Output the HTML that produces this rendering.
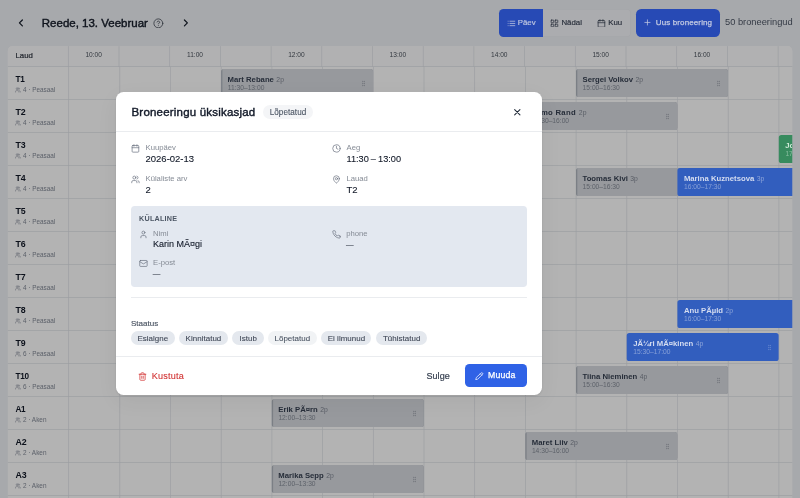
<!DOCTYPE html>
<html lang="et"><head><meta charset="utf-8"><title>Broneeringud</title>
<style>
*{box-sizing:border-box;margin:0;padding:0}
html,body{width:800px;height:498px;overflow:hidden}
body{font-family:"Liberation Sans",sans-serif;background:#a7a9ac;color:#0c111b;position:relative}
svg{display:block;fill:none;stroke:currentColor;stroke-width:2;stroke-linecap:round;stroke-linejoin:round}
.top{position:absolute;left:0;top:0;width:800px;height:45px}
.top .title{position:absolute;left:41.8px;top:14.7px;font-size:11.5px;font-weight:400;color:#0f141d;-webkit-text-stroke:.4px #0f141d;line-height:16px;white-space:nowrap;letter-spacing:0px}
.top svg.chev{position:absolute;width:11.8px;height:11.8px;top:17.1px;stroke-width:2.5;color:#0f141d}
.top svg.help{position:absolute;left:153.2px;top:17.7px;width:10.7px;height:10.7px;color:#30343c;stroke-width:1.8}
.seg{position:absolute;left:499.1px;top:8.6px;width:131.6px;height:28.5px;border-radius:4.6px;background:#abacaf;box-shadow:inset 0 0 0 .6px #a2a4a8}
.seg .a{position:absolute;left:0;top:0;width:43.5px;height:28.5px;background:#274ab5;border-radius:4.6px 0 0 4.6px}
.seg svg{position:absolute;top:9.95px;width:8.9px;height:8.9px;color:#262d39;stroke-width:2}
.seg span{position:absolute;top:0;font-size:7.85px;line-height:28px;color:#262d39;white-space:nowrap;-webkit-text-stroke:.15px currentColor}
.btn{position:absolute;left:635.8px;top:8.6px;width:84px;height:28.5px;border-radius:5.2px;background:#274ab5;color:#c3cae2;font-size:8px;line-height:28px;white-space:nowrap}
.btn svg{position:absolute;left:7.6px;top:9.9px;width:8.9px;height:8.9px}
.btn span{position:absolute;left:20px;-webkit-text-stroke:.25px #c3cae2;letter-spacing:.12px}
.cnt{position:absolute;left:725px;top:8px;font-size:9.3px;line-height:29px;color:#353b46;white-space:nowrap}
.gsvg{position:absolute;left:0;top:0;stroke:none}
.hdrl{position:absolute;left:15.5px;top:45.4px;font-size:7.8px;line-height:21px;color:#22262e;-webkit-text-stroke:.2px #22262e}
.hl{position:absolute;top:45.8px;width:50.7px;text-align:center;font-size:6.6px;line-height:18px;color:#33383f}
.row{position:absolute;left:7.7px;width:60px;height:33px}
.tn{position:absolute;left:7.8px;top:6.4px;letter-spacing:0;font-size:8.8px;line-height:12px;font-weight:700;color:#0c111b}
.ts{position:absolute;left:7.8px;top:18.3px;font-size:6.4px;line-height:10px;color:#5a5f68;white-space:nowrap}
.ts svg.ui{position:absolute;left:-.3px;top:2.2px;width:5.8px;height:5.8px}
.ts span{position:absolute;left:7.5px}
.ev{position:absolute;height:28px;overflow:hidden;white-space:nowrap}
.ev.g{color:#262d39}
.ev.b{color:#d4dcf0}
.ev.gr{color:#d0ead8}
.ev .en{position:absolute;left:6.5px;top:6.3px;font-size:7.72px;line-height:10px;font-weight:700}
.ev .en span{font-weight:400;font-size:6.8px;opacity:.55;margin-left:.3px}
.ev .et{position:absolute;left:6.6px;top:14.4px;font-size:6.7px;line-height:9px;opacity:.52}
.ev svg.grip{position:absolute;right:6px;top:10.6px;width:7px;height:7px;opacity:.32}
.modal{position:absolute;left:116px;top:92px;width:426px;height:303px;background:#fff;border-radius:7.6px;z-index:20;box-shadow:0 1px 2.5px rgba(0,0,0,.10),0 6px 22px rgba(0,0,0,.05)}

.modal .mt{position:absolute;left:15.5px;top:11px;font-size:11.5px;line-height:18px;font-weight:400;-webkit-text-stroke:.4px #111827;letter-spacing:0.2px;white-space:nowrap;color:#111827}
.pill{position:absolute;height:14.6px;border-radius:7.3px;font-size:7.95px;line-height:15.6px;-webkit-text-stroke:.1px currentColor;letter-spacing:.05px;text-align:center;color:#3f4756;background:#e4e8ee;white-space:nowrap}
.pill.lt{background:#f1f3f5;color:#4b5563}
.modal .x{position:absolute;left:395.5px;top:14.6px;width:10.6px;height:10.6px;color:#1f2937;stroke-width:2.4}
.hb{position:absolute;left:0;width:426px;height:0.7px;background:#eaecef}
.f{position:absolute}
.f svg{position:absolute;left:-0.35px;top:1.75px;width:8.9px;height:8.9px;color:#6b7280;stroke-width:1.9}
.f .k{position:absolute;left:14px;top:.5px;font-size:7.7px;line-height:10px;color:#858b95;white-space:nowrap}
.f .v{position:absolute;left:14px;top:9.6px;font-size:9.5px;line-height:13px;color:#111827;white-space:nowrap;-webkit-text-stroke:.1px #111827}
.box{position:absolute;left:15px;top:114px;width:396px;height:81px;border-radius:3.8px;background:#e3e8f0}
.box .bh{position:absolute;left:8px;top:7.5px;font-size:7.2px;line-height:10px;font-weight:700;color:#4b5563;letter-spacing:.25px}
.box .f .k{left:14.5px}.box .f .v{left:14.5px}.box .f svg{left:.3px}

.st{position:absolute;left:15px;top:226.9px;font-size:8.05px;line-height:10px;color:#4b5563;-webkit-text-stroke:.15px #4b5563}
.del{position:absolute;left:22px;top:277px;font-size:9.1px;line-height:14px;color:#d13232;white-space:nowrap;letter-spacing:.2px}
.del svg{position:absolute;left:0;top:2.5px;width:9px;height:9px}
.del span{position:absolute;left:13.8px;-webkit-text-stroke:.1px #d13232}
.cl{position:absolute;left:310.4px;top:277px;letter-spacing:.1px;font-size:9px;line-height:14px;color:#374151;-webkit-text-stroke:.2px #374151}
.ed{position:absolute;left:349px;top:272.1px;width:61.8px;height:23.1px;border-radius:4.5px;background:#2f62e6;color:#fff;font-size:8.7px;line-height:23px}
.ed svg{position:absolute;left:10px;top:7.5px;width:8.5px;height:8.5px}
.ed span{position:absolute;left:23px;-webkit-text-stroke:.25px #fff;letter-spacing:.22px}
.top,.modal,.tx{will-change:transform}
.tx{position:absolute;left:0;top:0;width:800px;height:498px;overflow:hidden}
</style></head><body>
<div class="top">
 <svg class="chev" style="left:14.7px" viewBox="0 0 24 24"><path d="m15 18-6-6 6-6"/></svg>
 <div class="title">Reede, 13. Veebruar</div>
 <svg class="help" viewBox="0 0 24 24"><circle cx="12" cy="12" r="10"/><path d="M9.09 9a3 3 0 0 1 5.83 1c0 2-3 3-3 3"/><path d="M12 17h.01"/></svg>
 <svg class="chev" style="left:179.5px" viewBox="0 0 24 24"><path d="m9 18 6-6-6-6"/></svg>
 <div class="seg">
  <div class="a"></div>
  <svg style="left:7.55px;color:#c3cae2" viewBox="0 0 24 24"><path d="M8 6h13M8 12h13M8 18h13M3 6h.01M3 12h.01M3 18h.01"/></svg><span style="left:18.6px;color:#c3cae2">Päev</span>
  <svg style="left:50.65px" viewBox="0 0 24 24"><rect x="3" y="3" width="7" height="7" rx="1"/><rect x="14" y="3" width="7" height="7" rx="1"/><rect x="14" y="14" width="7" height="7" rx="1"/><rect x="3" y="14" width="7" height="7" rx="1"/></svg><span style="left:62.3px">Nädal</span>
  <svg style="left:98.2px" viewBox="0 0 24 24"><rect x="3" y="4" width="18" height="18" rx="2"/><path d="M16 2v4M8 2v4M3 10h18"/></svg><span style="left:109.15px">Kuu</span>
 </div>
 <div class="btn"><svg viewBox="0 0 24 24"><path d="M5 12h14M12 5v14"/></svg><span>Uus broneering</span></div>
 <div class="cnt">50 broneeringud</div>
</div>
<svg class="gsvg" width="800" height="498" viewBox="0 0 800 498"><clipPath id="gc"><path d="M7.8 520V50.9a4.8 4.8 0 0 1 4.8 -4.8H787.5a4.8 4.8 0 0 1 4.8 4.8V520Z"/></clipPath>
<g clip-path="url(#gc)">
<rect x="0" y="0" width="800" height="520" fill="#b3b3b3"/>
<rect x="0" y="0" width="800" height="66.9" fill="#b1b1b2"/>
<g fill="#9c9ea2">
<rect x="0" y="66.24" width="800" height="0.66"/>
<rect x="0" y="99.24" width="800" height="0.66"/>
<rect x="0" y="132.24" width="800" height="0.66"/>
<rect x="0" y="165.24" width="800" height="0.66"/>
<rect x="0" y="198.24" width="800" height="0.66"/>
<rect x="0" y="231.24" width="800" height="0.66"/>
<rect x="0" y="264.24" width="800" height="0.66"/>
<rect x="0" y="297.24" width="800" height="0.66"/>
<rect x="0" y="330.24" width="800" height="0.66"/>
<rect x="0" y="363.24" width="800" height="0.66"/>
<rect x="0" y="396.24" width="800" height="0.66"/>
<rect x="0" y="429.24" width="800" height="0.66"/>
<rect x="0" y="462.24" width="800" height="0.66"/>
<rect x="0" y="495.24" width="800" height="0.66"/>
<rect x="0" y="528.24" width="800" height="0.66"/>
<rect x="67.97" y="46.1" width="0.66" height="20.80"/>
<rect x="68.37" y="66.9" width="0.66" height="460"/>
<rect x="118.67" y="46.1" width="0.66" height="20.80"/>
<rect x="119.47" y="66.9" width="0.66" height="460"/>
<rect x="169.37" y="46.1" width="0.66" height="20.80"/>
<rect x="170.17" y="66.9" width="0.66" height="460"/>
<rect x="220.07" y="46.1" width="0.66" height="20.80"/>
<rect x="220.87" y="66.9" width="0.66" height="460"/>
<rect x="270.77" y="46.1" width="0.66" height="20.80"/>
<rect x="271.57" y="66.9" width="0.66" height="460"/>
<rect x="321.47" y="46.1" width="0.66" height="20.80"/>
<rect x="322.27" y="66.9" width="0.66" height="460"/>
<rect x="372.17" y="46.1" width="0.66" height="20.80"/>
<rect x="372.97" y="66.9" width="0.66" height="460"/>
<rect x="422.87" y="46.1" width="0.66" height="20.80"/>
<rect x="423.67" y="66.9" width="0.66" height="460"/>
<rect x="473.57" y="46.1" width="0.66" height="20.80"/>
<rect x="474.37" y="66.9" width="0.66" height="460"/>
<rect x="524.27" y="46.1" width="0.66" height="20.80"/>
<rect x="525.07" y="66.9" width="0.66" height="460"/>
<rect x="574.97" y="46.1" width="0.66" height="20.80"/>
<rect x="575.77" y="66.9" width="0.66" height="460"/>
<rect x="625.67" y="46.1" width="0.66" height="20.80"/>
<rect x="626.47" y="66.9" width="0.66" height="460"/>
<rect x="676.37" y="46.1" width="0.66" height="20.80"/>
<rect x="677.17" y="66.9" width="0.66" height="460"/>
<rect x="727.07" y="46.1" width="0.66" height="20.80"/>
<rect x="727.87" y="66.9" width="0.66" height="460"/>
<rect x="777.77" y="46.1" width="0.66" height="20.80"/>
<rect x="778.57" y="66.9" width="0.66" height="460"/>
<rect x="828.47" y="46.1" width="0.66" height="20.80"/>
<rect x="829.27" y="66.9" width="0.66" height="460"/>
</g>
<rect x="221.10" y="69.10" width="151.95" height="28.0" rx="2.6" fill="#7b7f85"/>
<path d="M222.40 69.10H370.45a2.6 2.6 0 0 1 2.6 2.6v22.8a2.6 2.6 0 0 1 -2.6 2.6H222.40Z" fill="#97999d"/>
<rect x="576.00" y="69.10" width="151.95" height="28.0" rx="2.6" fill="#7b7f85"/>
<path d="M577.30 69.10H725.35a2.6 2.6 0 0 1 2.6 2.6v22.8a2.6 2.6 0 0 1 -2.6 2.6H577.30Z" fill="#97999d"/>
<rect x="525.30" y="102.10" width="151.95" height="28.0" rx="2.6" fill="#7b7f85"/>
<path d="M526.60 102.10H674.65a2.6 2.6 0 0 1 2.6 2.6v22.8a2.6 2.6 0 0 1 -2.6 2.6H526.60Z" fill="#97999d"/>
<rect x="778.80" y="135.10" width="151.95" height="28.0" rx="2.6" fill="#378b5e"/>
<rect x="576.00" y="168.10" width="151.95" height="28.0" rx="2.6" fill="#7b7f85"/>
<path d="M577.30 168.10H725.35a2.6 2.6 0 0 1 2.6 2.6v22.8a2.6 2.6 0 0 1 -2.6 2.6H577.30Z" fill="#97999d"/>
<rect x="677.40" y="168.10" width="151.95" height="28.0" rx="2.6" fill="#325ebe"/>
<rect x="677.40" y="300.10" width="151.95" height="28.0" rx="2.6" fill="#325ebe"/>
<rect x="626.70" y="333.10" width="151.95" height="28.0" rx="2.6" fill="#325ebe"/>
<rect x="576.00" y="366.10" width="151.95" height="28.0" rx="2.6" fill="#7b7f85"/>
<path d="M577.30 366.10H725.35a2.6 2.6 0 0 1 2.6 2.6v22.8a2.6 2.6 0 0 1 -2.6 2.6H577.30Z" fill="#97999d"/>
<rect x="271.80" y="399.10" width="151.95" height="28.0" rx="2.6" fill="#7b7f85"/>
<path d="M273.10 399.10H421.15a2.6 2.6 0 0 1 2.6 2.6v22.8a2.6 2.6 0 0 1 -2.6 2.6H273.10Z" fill="#97999d"/>
<rect x="525.30" y="432.10" width="151.95" height="28.0" rx="2.6" fill="#7b7f85"/>
<path d="M526.60 432.10H674.65a2.6 2.6 0 0 1 2.6 2.6v22.8a2.6 2.6 0 0 1 -2.6 2.6H526.60Z" fill="#97999d"/>
<rect x="271.80" y="465.10" width="151.95" height="28.0" rx="2.6" fill="#7b7f85"/>
<path d="M273.10 465.10H421.15a2.6 2.6 0 0 1 2.6 2.6v22.8a2.6 2.6 0 0 1 -2.6 2.6H273.10Z" fill="#97999d"/>
</g></svg>
<div class="tx"><div class="ev g" style="left:221.10px;width:151.95px;top:69.10px"><div class="en">Mart Rebane <span>2p</span></div><div class="et">11:30–13:00</div><svg class="grip" viewBox="0 0 24 24"><circle cx="9" cy="5" r="1"/><circle cx="9" cy="12" r="1"/><circle cx="9" cy="19" r="1"/><circle cx="15" cy="5" r="1"/><circle cx="15" cy="12" r="1"/><circle cx="15" cy="19" r="1"/></svg></div>
<div class="ev g" style="left:576.00px;width:151.95px;top:69.10px"><div class="en">Sergei Volkov <span>2p</span></div><div class="et">15:00–16:30</div><svg class="grip" viewBox="0 0 24 24"><circle cx="9" cy="5" r="1"/><circle cx="9" cy="12" r="1"/><circle cx="9" cy="19" r="1"/><circle cx="15" cy="5" r="1"/><circle cx="15" cy="12" r="1"/><circle cx="15" cy="19" r="1"/></svg></div>
<div class="ev g" style="left:525.30px;width:151.95px;top:102.10px"><div class="en" style="letter-spacing:.28px">Urmo Rand <span>2p</span></div><div class="et">14:30–16:00</div><svg class="grip" viewBox="0 0 24 24"><circle cx="9" cy="5" r="1"/><circle cx="9" cy="12" r="1"/><circle cx="9" cy="19" r="1"/><circle cx="15" cy="5" r="1"/><circle cx="15" cy="12" r="1"/><circle cx="15" cy="19" r="1"/></svg></div>
<div class="ev gr" style="left:778.80px;width:13.50px;top:135.10px"><div class="en">Jo <span>2p</span></div><div class="et">17:00</div></div>
<div class="ev g" style="left:576.00px;width:151.95px;top:168.10px"><div class="en">Toomas Kivi <span>3p</span></div><div class="et">15:00–16:30</div><svg class="grip" viewBox="0 0 24 24"><circle cx="9" cy="5" r="1"/><circle cx="9" cy="12" r="1"/><circle cx="9" cy="19" r="1"/><circle cx="15" cy="5" r="1"/><circle cx="15" cy="12" r="1"/><circle cx="15" cy="19" r="1"/></svg></div>
<div class="ev b" style="left:677.40px;width:114.90px;top:168.10px"><div class="en">Marina Kuznetsova <span>3p</span></div><div class="et">16:00–17:30</div></div>
<div class="ev b" style="left:677.40px;width:114.90px;top:300.10px"><div class="en">Anu PÃµld <span>2p</span></div><div class="et">16:00–17:30</div></div>
<div class="ev b" style="left:626.70px;width:151.95px;top:333.10px"><div class="en">JÃ¼ri MÃ¤kinen <span>4p</span></div><div class="et">15:30–17:00</div><svg class="grip" viewBox="0 0 24 24"><circle cx="9" cy="5" r="1"/><circle cx="9" cy="12" r="1"/><circle cx="9" cy="19" r="1"/><circle cx="15" cy="5" r="1"/><circle cx="15" cy="12" r="1"/><circle cx="15" cy="19" r="1"/></svg></div>
<div class="ev g" style="left:576.00px;width:151.95px;top:366.10px"><div class="en">Tiina Nieminen <span>4p</span></div><div class="et">15:00–16:30</div><svg class="grip" viewBox="0 0 24 24"><circle cx="9" cy="5" r="1"/><circle cx="9" cy="12" r="1"/><circle cx="9" cy="19" r="1"/><circle cx="15" cy="5" r="1"/><circle cx="15" cy="12" r="1"/><circle cx="15" cy="19" r="1"/></svg></div>
<div class="ev g" style="left:271.80px;width:151.95px;top:399.10px"><div class="en">Erik PÃ¤rn <span>2p</span></div><div class="et">12:00–13:30</div><svg class="grip" viewBox="0 0 24 24"><circle cx="9" cy="5" r="1"/><circle cx="9" cy="12" r="1"/><circle cx="9" cy="19" r="1"/><circle cx="15" cy="5" r="1"/><circle cx="15" cy="12" r="1"/><circle cx="15" cy="19" r="1"/></svg></div>
<div class="ev g" style="left:525.30px;width:151.95px;top:432.10px"><div class="en">Maret Liiv <span>2p</span></div><div class="et">14:30–16:00</div><svg class="grip" viewBox="0 0 24 24"><circle cx="9" cy="5" r="1"/><circle cx="9" cy="12" r="1"/><circle cx="9" cy="19" r="1"/><circle cx="15" cy="5" r="1"/><circle cx="15" cy="12" r="1"/><circle cx="15" cy="19" r="1"/></svg></div>
<div class="ev g" style="left:271.80px;width:151.95px;top:465.10px"><div class="en">Marika Sepp <span>2p</span></div><div class="et">12:00–13:30</div><svg class="grip" viewBox="0 0 24 24"><circle cx="9" cy="5" r="1"/><circle cx="9" cy="12" r="1"/><circle cx="9" cy="19" r="1"/><circle cx="15" cy="5" r="1"/><circle cx="15" cy="12" r="1"/><circle cx="15" cy="19" r="1"/></svg></div>
<div class="hl" style="left:68.30px">10:00</div>
<div class="hl" style="left:169.70px">11:00</div>
<div class="hl" style="left:271.10px">12:00</div>
<div class="hl" style="left:372.50px">13:00</div>
<div class="hl" style="left:473.90px">14:00</div>
<div class="hl" style="left:575.30px">15:00</div>
<div class="hl" style="left:676.70px">16:00</div>
<div class="row" style="top:66.90px"><div class="tn" style="font-size:8.2px;letter-spacing:-.3px;top:7.1px">T1</div><div class="ts"><svg class="ui" viewBox="0 0 24 24"><path d="M16 21v-2a4 4 0 0 0-4-4H6a4 4 0 0 0-4 4v2"/><circle cx="9" cy="7" r="4"/><path d="M22 21v-2a4 4 0 0 0-3-3.87"/><path d="M16 3.13a4 4 0 0 1 0 7.75"/></svg><span>4 · Peasaal</span></div></div>
<div class="row" style="top:99.90px"><div class="tn">T2</div><div class="ts"><svg class="ui" viewBox="0 0 24 24"><path d="M16 21v-2a4 4 0 0 0-4-4H6a4 4 0 0 0-4 4v2"/><circle cx="9" cy="7" r="4"/><path d="M22 21v-2a4 4 0 0 0-3-3.87"/><path d="M16 3.13a4 4 0 0 1 0 7.75"/></svg><span>4 · Peasaal</span></div></div>
<div class="row" style="top:132.90px"><div class="tn">T3</div><div class="ts"><svg class="ui" viewBox="0 0 24 24"><path d="M16 21v-2a4 4 0 0 0-4-4H6a4 4 0 0 0-4 4v2"/><circle cx="9" cy="7" r="4"/><path d="M22 21v-2a4 4 0 0 0-3-3.87"/><path d="M16 3.13a4 4 0 0 1 0 7.75"/></svg><span>4 · Peasaal</span></div></div>
<div class="row" style="top:165.90px"><div class="tn">T4</div><div class="ts"><svg class="ui" viewBox="0 0 24 24"><path d="M16 21v-2a4 4 0 0 0-4-4H6a4 4 0 0 0-4 4v2"/><circle cx="9" cy="7" r="4"/><path d="M22 21v-2a4 4 0 0 0-3-3.87"/><path d="M16 3.13a4 4 0 0 1 0 7.75"/></svg><span>4 · Peasaal</span></div></div>
<div class="row" style="top:198.90px"><div class="tn">T5</div><div class="ts"><svg class="ui" viewBox="0 0 24 24"><path d="M16 21v-2a4 4 0 0 0-4-4H6a4 4 0 0 0-4 4v2"/><circle cx="9" cy="7" r="4"/><path d="M22 21v-2a4 4 0 0 0-3-3.87"/><path d="M16 3.13a4 4 0 0 1 0 7.75"/></svg><span>4 · Peasaal</span></div></div>
<div class="row" style="top:231.90px"><div class="tn">T6</div><div class="ts"><svg class="ui" viewBox="0 0 24 24"><path d="M16 21v-2a4 4 0 0 0-4-4H6a4 4 0 0 0-4 4v2"/><circle cx="9" cy="7" r="4"/><path d="M22 21v-2a4 4 0 0 0-3-3.87"/><path d="M16 3.13a4 4 0 0 1 0 7.75"/></svg><span>4 · Peasaal</span></div></div>
<div class="row" style="top:264.90px"><div class="tn">T7</div><div class="ts"><svg class="ui" viewBox="0 0 24 24"><path d="M16 21v-2a4 4 0 0 0-4-4H6a4 4 0 0 0-4 4v2"/><circle cx="9" cy="7" r="4"/><path d="M22 21v-2a4 4 0 0 0-3-3.87"/><path d="M16 3.13a4 4 0 0 1 0 7.75"/></svg><span>4 · Peasaal</span></div></div>
<div class="row" style="top:297.90px"><div class="tn">T8</div><div class="ts"><svg class="ui" viewBox="0 0 24 24"><path d="M16 21v-2a4 4 0 0 0-4-4H6a4 4 0 0 0-4 4v2"/><circle cx="9" cy="7" r="4"/><path d="M22 21v-2a4 4 0 0 0-3-3.87"/><path d="M16 3.13a4 4 0 0 1 0 7.75"/></svg><span>4 · Peasaal</span></div></div>
<div class="row" style="top:330.90px"><div class="tn">T9</div><div class="ts"><svg class="ui" viewBox="0 0 24 24"><path d="M16 21v-2a4 4 0 0 0-4-4H6a4 4 0 0 0-4 4v2"/><circle cx="9" cy="7" r="4"/><path d="M22 21v-2a4 4 0 0 0-3-3.87"/><path d="M16 3.13a4 4 0 0 1 0 7.75"/></svg><span>6 · Peasaal</span></div></div>
<div class="row" style="top:363.90px"><div class="tn" style="font-size:8.2px;letter-spacing:-.3px;top:7.1px">T10</div><div class="ts"><svg class="ui" viewBox="0 0 24 24"><path d="M16 21v-2a4 4 0 0 0-4-4H6a4 4 0 0 0-4 4v2"/><circle cx="9" cy="7" r="4"/><path d="M22 21v-2a4 4 0 0 0-3-3.87"/><path d="M16 3.13a4 4 0 0 1 0 7.75"/></svg><span>6 · Peasaal</span></div></div>
<div class="row" style="top:396.90px"><div class="tn" style="font-size:8.2px;letter-spacing:-.3px;top:7.1px">A1</div><div class="ts"><svg class="ui" viewBox="0 0 24 24"><path d="M16 21v-2a4 4 0 0 0-4-4H6a4 4 0 0 0-4 4v2"/><circle cx="9" cy="7" r="4"/><path d="M22 21v-2a4 4 0 0 0-3-3.87"/><path d="M16 3.13a4 4 0 0 1 0 7.75"/></svg><span>2 · Aken</span></div></div>
<div class="row" style="top:429.90px"><div class="tn">A2</div><div class="ts"><svg class="ui" viewBox="0 0 24 24"><path d="M16 21v-2a4 4 0 0 0-4-4H6a4 4 0 0 0-4 4v2"/><circle cx="9" cy="7" r="4"/><path d="M22 21v-2a4 4 0 0 0-3-3.87"/><path d="M16 3.13a4 4 0 0 1 0 7.75"/></svg><span>2 · Aken</span></div></div>
<div class="row" style="top:462.90px"><div class="tn">A3</div><div class="ts"><svg class="ui" viewBox="0 0 24 24"><path d="M16 21v-2a4 4 0 0 0-4-4H6a4 4 0 0 0-4 4v2"/><circle cx="9" cy="7" r="4"/><path d="M22 21v-2a4 4 0 0 0-3-3.87"/><path d="M16 3.13a4 4 0 0 1 0 7.75"/></svg><span>2 · Aken</span></div></div>
<div class="row" style="top:495.90px"><div class="tn">A4</div><div class="ts"><svg class="ui" viewBox="0 0 24 24"><path d="M16 21v-2a4 4 0 0 0-4-4H6a4 4 0 0 0-4 4v2"/><circle cx="9" cy="7" r="4"/><path d="M22 21v-2a4 4 0 0 0-3-3.87"/><path d="M16 3.13a4 4 0 0 1 0 7.75"/></svg><span>2 · Aken</span></div></div></div>
<div class="tx"><div class="hdrl">Laud</div></div>
<div class="modal">
 <div class="mt">Broneeringu üksikasjad</div>
 <div class="pill lt" style="left:146.8px;top:12.9px;width:50.4px;font-size:8.15px;background:#f4f5f7">Lõpetatud</div>
 <svg class="x" viewBox="0 0 24 24"><path d="M18 6 6 18M6 6l12 12"/></svg>
 <div class="hb" style="top:39px"></div>
 <div class="f" style="left:15.5px;top:50.4px"><svg viewBox="0 0 24 24"><rect x="3" y="4" width="18" height="18" rx="2"/><path d="M16 2v4M8 2v4M3 10h18"/></svg><div class="k">Kuupäev</div><div class="v">2026-02-13</div></div>
 <div class="f" style="left:216.5px;top:50.4px"><svg viewBox="0 0 24 24"><circle cx="12" cy="12" r="10"/><path d="M12 6v6l4 2"/></svg><div class="k">Aeg</div><div class="v" style="word-spacing:-.5px;font-size:9.2px;top:10.3px">11:30 – 13:00</div></div>
 <div class="f" style="left:15.5px;top:81px"><svg viewBox="0 0 24 24"><path d="M16 21v-2a4 4 0 0 0-4-4H6a4 4 0 0 0-4 4v2"/><circle cx="9" cy="7" r="4"/><path d="M22 21v-2a4 4 0 0 0-3-3.87"/><path d="M16 3.13a4 4 0 0 1 0 7.75"/></svg><div class="k">Külaliste arv</div><div class="v">2</div></div>
 <div class="f" style="left:216.5px;top:81px"><svg viewBox="0 0 24 24"><path d="M20 10c0 6-8 12-8 12s-8-6-8-12a8 8 0 0 1 16 0Z"/><circle cx="12" cy="10" r="3"/></svg><div class="k">Lauad</div><div class="v">T2</div></div>
 <div class="box">
  <div class="bh">KÜLALINE</div>
  <div class="f" style="left:7.5px;top:22.7px"><svg viewBox="0 0 24 24"><path d="M19 21v-2a4 4 0 0 0-4-4H9a4 4 0 0 0-4 4v2"/><circle cx="12" cy="7" r="4"/></svg><div class="k">Nimi</div><div class="v" style="font-size:9px">Karin MÃ¤gi</div></div>
  <div class="f" style="left:200.7px;top:22.7px"><svg viewBox="0 0 24 24"><path d="M22 16.92v3a2 2 0 0 1-2.18 2 19.79 19.79 0 0 1-8.63-3.07 19.5 19.5 0 0 1-6-6 19.79 19.79 0 0 1-3.07-8.67A2 2 0 0 1 4.11 2h3a2 2 0 0 1 2 1.72 12.84 12.84 0 0 0 .7 2.81 2 2 0 0 1-.45 2.11L8.09 9.91a16 16 0 0 0 6 6l1.27-1.27a2 2 0 0 1 2.11-.45 12.84 12.84 0 0 0 2.81.7A2 2 0 0 1 22 16.92z"/></svg><div class="k">phone</div><div class="v" style="font-size:7.6px;left:14.2px">—</div></div>
  <div class="f" style="left:7.5px;top:51.1px"><svg viewBox="0 0 24 24"><rect x="2" y="4" width="20" height="16" rx="2"/><path d="m22 7-8.97 5.7a1.94 1.94 0 0 1-2.06 0L2 7"/></svg><div class="k">E-post</div><div class="v" style="font-size:7.6px;left:14.2px">—</div></div>
 </div>
 <div class="hb" style="top:205px;left:15px;width:396px"></div>
 <div class="st">Staatus</div>
 <div class="pill" style="left:15.1px;top:238.8px;width:43.5px">Esialgne</div>
 <div class="pill" style="left:62.7px;top:238.8px;width:49.5px">Kinnitatud</div>
 <div class="pill" style="left:116.3px;top:238.8px;width:31.7px">Istub</div>
 <div class="pill lt" style="left:151.8px;top:238.8px;width:49.1px">Lõpetatud</div>
 <div class="pill" style="left:205.4px;top:238.8px;width:50.1px">Ei ilmunud</div>
 <div class="pill" style="left:260.2px;top:238.8px;width:51.0px">Tühistatud</div>
 <div class="hb" style="top:263.5px"></div>
 <div class="del"><svg viewBox="0 0 24 24"><path d="M3 6h18"/><path d="M19 6v14c0 1-1 2-2 2H7c-1 0-2-1-2-2V6"/><path d="M8 6V4c0-1 1-2 2-2h4c1 0 2 1 2 2v2"/><path d="M10 11v6M14 11v6"/></svg><span>Kustuta</span></div>
 <div class="cl">Sulge</div>
 <div class="ed"><svg viewBox="0 0 24 24"><path d="M17 3a2.85 2.83 0 1 1 4 4L7.5 20.5 2 22l1.5-5.5Z"/><path d="m15 5 4 4"/></svg><span>Muuda</span></div>
</div>
</body></html>
